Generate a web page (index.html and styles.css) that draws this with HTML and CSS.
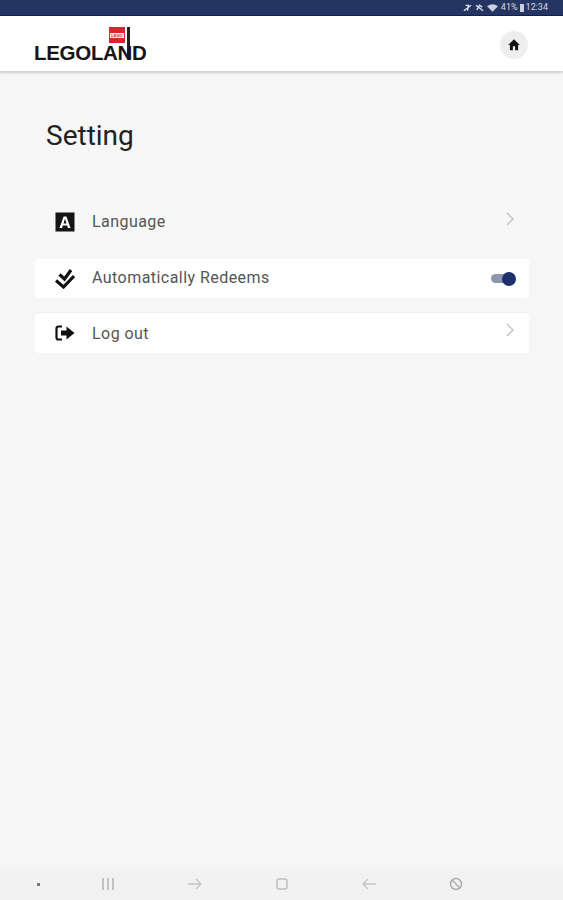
FILE: index.html
```html
<!DOCTYPE HTML>
<html lang="en">
<head>
  <meta charset="UTF-8">
  <meta name="viewport" content="width=device-width, initial-scale=1.0">
  <title>Setting</title>
  <link rel="stylesheet" href="styles.css">
</head>
<body>
  <div class="phone">
    <!-- Status bar -->
    <div class="status-bar">
      <svg class="status-icon" viewBox="0 0 10 8"><path d="M1 7 L9 1 M3 1 L6 1 L5 7" fill="none" stroke="#dfe3ee" stroke-width="1.5"/></svg>
      <svg class="status-icon" viewBox="0 0 10 8"><path d="M1 1 L9 7 M2 6 L5 1 L8 3" fill="none" stroke="#dfe3ee" stroke-width="1.5"/></svg>
      <svg class="status-icon wifi" viewBox="0 0 12 8"><path d="M0 2 Q6 -2 12 2 L6 8 Z" fill="#c9cfde"/></svg>
      <span>41%</span>
      <span class="battery"></span>
      <span>12:34</span>
    </div>

    <!-- Header -->
    <header class="app-header">
      <div class="logo">
        <div class="logo-mark">
          <span class="logo-brick"><span class="logo-brick-text">LEGO</span></span>
          <span class="logo-bar"></span>
        </div>
        <div class="logo-text">LEGOLAND</div>
      </div>
      <button class="home-button">
        <svg viewBox="0 0 24 24" width="14" height="14"><path d="M10 21v-7h4v7h5v-9h3L12 2 2 12h3v9z" fill="#111"/></svg>
      </button>
    </header>

    <!-- Settings -->
    <main class="content">
      <h1 class="page-title">Setting</h1>
      <div class="menu">
        <div class="menu-row row-language">
          <svg class="row-icon" viewBox="0 0 20 20"><rect x="0.5" y="0.5" width="19" height="19" fill="#151515"/><path d="M4.5 16 L8.6 4.5 H11.4 L15.5 16 H12.9 L12.2 13.6 H7.8 L7.1 16 Z M8.5 11.4 H11.5 L10 6.8 Z" fill="#fff" fill-rule="evenodd"/></svg>
          <span class="row-label label-up">Language</span>
          <svg class="chevron" viewBox="0 0 8 14"><path d="M1 1 L7 7 L1 13" fill="none" stroke="#c4c4c4" stroke-width="1.5"/></svg>
        </div>
        <div class="menu-row row-redeem">
          <svg class="row-icon" viewBox="0 0 20 20"><path d="M1 11.5 L8.5 18 L19 7" fill="none" stroke="#111" stroke-width="3.2"/><path d="M4.5 5.5 L9.5 10 L16 1" fill="none" stroke="#111" stroke-width="3.2"/></svg>
          <span class="row-label label-up">Automatically Redeems</span>
          <div class="toggle"><span class="toggle-knob"></span></div>
        </div>
        <div class="menu-row row-logout">
          <svg class="row-icon" viewBox="0 0 20 20"><path d="M7 3.5 H3.5 Q1.5 3.5 1.5 5.5 V14.5 Q1.5 16.5 3.5 16.5 H7" fill="none" stroke="#111" stroke-width="2.2"/><path d="M6 7.5 H11.5 V3.5 L19.5 10 L11.5 16.5 V12.5 H6 Z" fill="#111"/></svg>
          <span class="row-label">Log out</span>
          <svg class="chevron" viewBox="0 0 8 14"><path d="M1 1 L7 7 L1 13" fill="none" stroke="#c4c4c4" stroke-width="1.5"/></svg>
        </div>
      </div>
    </main>

    <!-- Navigation bar -->
    <nav class="nav-bar">
      <span class="nav-dot"></span>
      <svg class="nav-icon" viewBox="0 0 14 14"><path d="M2 1 V13 M7 1 V13 M12 1 V13" fill="none" stroke="#b5b5b5" stroke-width="1.5"/></svg>
      <svg class="nav-icon" viewBox="0 0 14 14"><path d="M0 7 H13 M8 2 L13 7 L8 12" fill="none" stroke="#c4c4c4" stroke-width="1.3"/></svg>
      <svg class="nav-icon" viewBox="0 0 14 14"><rect x="2" y="2" width="10" height="10" rx="2" fill="none" stroke="#bdbdbd" stroke-width="1.4"/></svg>
      <svg class="nav-icon" viewBox="0 0 14 14"><path d="M14 7 H1 M6 2 L1 7 L6 12" fill="none" stroke="#c4c4c4" stroke-width="1.3"/></svg>
      <svg class="nav-icon" viewBox="0 0 14 14"><circle cx="7" cy="7" r="5.5" fill="none" stroke="#adadad" stroke-width="1.5"/><path d="M3 3 L11 11" stroke="#adadad" stroke-width="1.5"/></svg>
    </nav>
  </div>
</body>
</html>
```

FILE: styles.css
```css
body {
  margin: 0;
  padding: 0;
  background-color: #f6f6f6;
  font-family: 'Roboto', sans-serif;
  color: #333;
}
.phone {
  display: flex;
  flex-direction: column;
  height: 900px;
  overflow: hidden;
}

/* Status bar */
.status-bar {
  display: flex;
  align-items: center;
  justify-content: flex-end;
  gap: 2px;
  box-sizing: border-box;
  height: 16px;
  padding-right: 15px;
  background-color: #253561;
  border-bottom: 1px solid #101f5c;
  color: #d5d9e6;
  font-size: 9px;
  line-height: 15px;
}
.status-icon {
  width: 9px;
  height: 8px;
  margin-right: 1px;
}
.status-icon.wifi {
  width: 11px;
}
.battery {
  width: 4px;
  height: 8px;
  background-color: #c9cfde;
}

/* Header */
.app-header {
  display: flex;
  align-items: center;
  justify-content: space-between;
  flex-shrink: 0;
  height: 55px;
  padding: 0 35px 0 34px;
  background-color: #fff;
  box-shadow: 0 2px 2px rgba(0, 0, 0, 0.16);
}
.logo {
  display: flex;
  flex-direction: column;
  align-items: flex-end;
  width: 113px;
}
.logo-mark {
  display: flex;
  align-items: flex-start;
  height: 18px;
  margin-right: 17px;
}
.logo-brick {
  display: flex;
  align-items: center;
  justify-content: center;
  width: 16px;
  height: 16px;
  background-color: #d8262c;
}
.logo-brick-text {
  padding: 0 1px;
  background-color: #f4e8e0;
  color: #d8262c;
  font-family: 'Liberation Sans', sans-serif;
  font-size: 4px;
  font-weight: bold;
  line-height: 5px;
}
.logo-bar {
  width: 3px;
  height: 32px;
  margin-left: 2px;
  background-color: #222;
}
.logo-text {
  width: 113px;
  color: #151515;
  font-family: 'Liberation Sans', sans-serif;
  font-size: 20.5px;
  font-weight: bold;
  line-height: 15px;
  letter-spacing: -0.3px;
  white-space: nowrap;
}
.home-button {
  display: flex;
  align-items: center;
  justify-content: center;
  width: 28px;
  height: 28px;
  margin-top: 3px;
  padding: 0;
  border: none;
  border-radius: 50%;
  background-color: #eeeeee;
}

/* Settings list */
.content {
  flex: 1;
  padding: 0 34px 0 35px;
}
.page-title {
  margin: 48px 0 0 11px;
  color: #222;
  font-size: 28px;
  font-weight: 400;
  line-height: 34px;
}
.menu {
  display: flex;
  flex-direction: column;
  margin-top: 50px;
}
.menu-row {
  display: flex;
  align-items: center;
  padding: 0 14px 0 20px;
  border-radius: 4px;
}
.row-language {
  height: 38px;
  background-color: #f7f7f7;
}
.row-redeem {
  height: 39px;
  margin-top: 18px;
  background-color: #fff;
}
.row-logout {
  height: 41px;
  margin-top: 14px;
  background-color: #fff;
  border-top: 1px solid #eeeeee;
  box-sizing: border-box;
}
.row-icon {
  width: 20px;
  height: 20px;
  flex-shrink: 0;
}
.row-label {
  flex: 1;
  margin-left: 17px;
  color: #555;
  font-size: 16px;
  letter-spacing: 0.45px;
}
.label-up {
  margin-top: -2px;
}
.chevron {
  width: 8px;
  height: 14px;
  margin: -6px 1px 0 0;
}
.toggle {
  position: relative;
  width: 24px;
  height: 9px;
  border-radius: 5px;
  background-color: #8e97ae;
}
.toggle-knob {
  position: absolute;
  top: -2.5px;
  right: -1px;
  width: 14px;
  height: 14px;
  border-radius: 50%;
  background-color: #1f2f6e;
}

/* Navigation bar */
.nav-bar {
  display: flex;
  align-items: center;
  flex-shrink: 0;
  gap: 73px;
  box-sizing: border-box;
  height: 32px;
  padding-left: 37px;
  background-color: #f2f2f2;
}
.nav-dot {
  width: 3px;
  height: 3px;
  margin-right: -12px;
  background-color: #777;
}
.nav-icon {
  width: 14px;
  height: 14px;
}
```
